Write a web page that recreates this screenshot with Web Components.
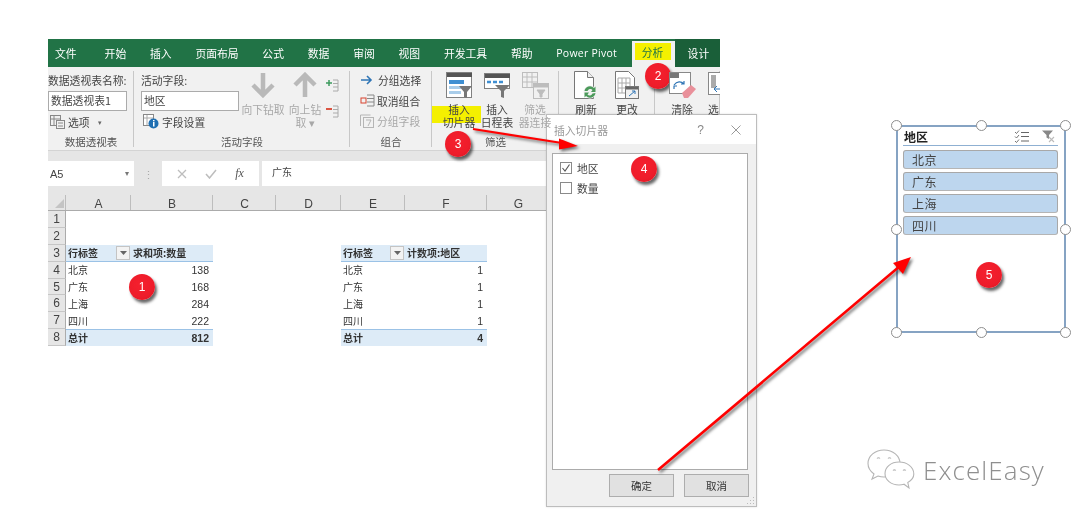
<!DOCTYPE html>
<html lang="zh"><head><meta charset="utf-8"><title>插入切片器</title>
<style>
html,body{margin:0;background:#fff}
body{font-family:"Noto Sans CJK SC","Liberation Sans",sans-serif;color:#444}
svg{display:block}
</style></head><body>
<x-app>
  <x-excel></x-excel>
  <x-dialog></x-dialog>
  <x-slicer></x-slicer>
  <x-logo></x-logo>
  <x-arrows></x-arrows>
  <x-badge style="left:129px;top:274px">1</x-badge>
  <x-badge style="left:645px;top:63px">2</x-badge>
  <x-badge style="left:445px;top:131px">3</x-badge>
  <x-badge style="left:631px;top:156px">4</x-badge>
  <x-badge style="left:976px;top:262px">5</x-badge>
</x-app>
<script>
const FONT='"Noto Sans CJK SC","Liberation Sans",sans-serif';
function def(name,css,html){
  customElements.define(name,class extends HTMLElement{
    constructor(){super();const s=this.attachShadow({mode:'open'});
      s.innerHTML='<style>'+css+'svg{display:block}</style>'+(typeof html==='function'?html(this):html);}
  });
}
def('x-app',':host{display:block;position:relative;width:1080px;height:522px;overflow:hidden;background:#fff;filter:blur(.3px)}','<slot></slot>');

def('x-badge',`:host{position:absolute;display:flex;width:26px;height:26px;border-radius:50%;align-items:center;justify-content:center;
  background:radial-gradient(circle at 45% 40%,#f5202e 0,#ee1c2a 60%,#d5141f 100%);color:#fff;font:12px "Liberation Sans",sans-serif;
  box-shadow:2px 3px 3px rgba(0,0,0,.6)}`,'<slot></slot>');

def('x-arrows',':host{position:absolute;left:0;top:0;width:1080px;height:522px;display:block;pointer-events:none}',
`<svg width="1080" height="522" style="filter:drop-shadow(2px 2px 1.5px rgba(0,0,0,.55))">
  <g fill="#f00" stroke="#f00">
   <line x1="473" y1="129" x2="562" y2="143" stroke-width="2.2"/>
   <polygon points="578,146 559,138.5 559,149.5" stroke="none"/>
   <line x1="658" y1="470" x2="900" y2="266" stroke-width="2.6"/>
   <polygon points="911,257 893,263 903,274" stroke="none"/>
  </g></svg>`);

/* ribbon group */
def('x-group',`:host{display:flex;flex-direction:column;box-sizing:border-box;position:relative;height:83px;flex:none}
 .c{flex:1;display:flex;min-height:0;position:relative;z-index:1}
 .t{height:16px;line-height:16px;text-align:center;font-size:10.5px;color:#555;flex:none;position:relative;z-index:2}
 :host::after{content:"";position:absolute;right:0;top:4px;bottom:3px;width:1px;background:#c8c8c8}`,
 h=>`<div class="c"><slot></slot></div><div class="t">${h.getAttribute('title')||''}</div>`);

/* big ribbon button */
def('x-big',`:host{display:flex;flex-direction:column;align-items:center;flex:none;position:relative;font-size:10.8px;line-height:13px;text-align:center;color:#444}
 :host([off]){color:#a8a8a8}
 .i{height:36px;display:flex;align-items:center;justify-content:center;flex:none}
 .l{white-space:pre;position:relative}`,
 h=>`<div class="i"><slot name="i"></slot></div><div class="l">${h.getAttribute('label')}</div>`);

const sIcon={
 down:'<svg width="24" height="26" viewBox="0 0 24 26" fill="none" stroke="#b9b9b9" stroke-width="4.5"><path d="M12 1V23M2 13l10 10 10-10"/></svg>',
 up:'<svg width="24" height="26" viewBox="0 0 24 26" fill="none" stroke="#b9b9b9" stroke-width="4.5"><path d="M12 25V3M2 13L12 3l10 10"/></svg>',
 slicer:'<svg width="27" height="27" viewBox="0 0 27 27"><rect x=".5" y=".5" width="25" height="25" fill="#fff" stroke="#808080"/><rect x="1" y="1" width="25" height="4" fill="#555"/><rect x="3" y="8" width="15" height="4" fill="#3f8fd2"/><rect x="3" y="14" width="12" height="3" fill="#a9cdea"/><rect x="3" y="19" width="12" height="3" fill="#a9cdea"/><path d="M13 14h13l-5 6v6l-3-1v-5z" fill="#777"/></svg>',
 time:'<svg width="27" height="27" viewBox="0 0 27 27"><rect x=".5" y="1.5" width="25" height="15" fill="#fff" stroke="#808080"/><rect x="1" y="2" width="25" height="4" fill="#555"/><path d="M3 10h4M9 10h4M15 10h4" stroke="#3f8fd2" stroke-width="2.5"/><path d="M11 13h15l-6 6v7l-3-1v-6z" fill="#777"/></svg>',
 conn:'<svg width="27" height="27" viewBox="0 0 27 27" fill="none" stroke="#bdbdbd"><rect x=".5" y=".5" width="15" height="15"/><path d="M5 1v14M10 1v14M1 5h14M1 10h14"/><rect x="11.5" y="11.5" width="15" height="15" fill="#f1f1f1"/><rect x="12" y="12" width="14" height="3" fill="#bdbdbd"/><path d="M15 18h8l-3 4v3h-2v-3z" fill="#bdbdbd"/></svg>',
 refresh:'<svg width="24" height="29" viewBox="0 0 24 29"><path d="M.5.5h13l6 6v21H.5z" fill="#fff" stroke="#777"/><path d="M13.5.5v6h6" fill="#eee" stroke="#777"/><circle cx="16" cy="21" r="6.5" fill="#f1f1f1"/><path d="M10.5 20a5.5 5.5 0 0 1 9.5-3l1.5-1.5V21H17l1.5-2a3 3 0 0 0-5 1zM21.5 22a5.5 5.5 0 0 1-9.5 3l-1.5 1.5V21.5H15L13.5 23.5a3 3 0 0 0 5-1z" fill="#4c9a5b"/></svg>',
 change:'<svg width="24" height="29" viewBox="0 0 24 29"><path d="M.5.5h13l6 6v21H.5z" fill="#fff" stroke="#777"/><path d="M3 7h12v15H3zM3 12h12M3 17h12M7 7v15M11 7v15" stroke="#aaa" fill="none"/><rect x="10.5" y="15.5" width="13" height="12" fill="#f1f1f1" stroke="#777"/><rect x="11" y="16" width="12" height="2.5" fill="#666"/><path d="M14 25l6-5M20 23v-3h-3" stroke="#2f75b5" fill="none"/></svg>',
 clear:'<svg width="27" height="27" viewBox="0 0 27 27"><rect x=".5" y=".5" width="21" height="21" fill="#fff" stroke="#888"/><rect x="1" y="1" width="9" height="5" fill="#777"/><path d="M5 13c3-4 7-4 10-1M15 9v3h-3M5 17v-3h3" fill="none" stroke="#2f75b5" stroke-width="1.2"/><path d="M13 21l9-8 5 4-8 9h-4z" fill="#e9909a"/></svg>',
 sel:'<svg width="27" height="27" viewBox="0 0 27 27"><rect x=".5" y=".5" width="24" height="22" fill="#fff" stroke="#888"/><rect x="3" y="3" width="5" height="13" fill="#aaa"/><path d="M6 17h7M6 17l3-3M6 17l3 3" stroke="#2f75b5" fill="none"/></svg>'
};

def('x-excel',`:host{position:absolute;left:48px;top:39px;width:672px;display:flex;flex-direction:column;overflow:hidden;font-family:${FONT};color:#444}
 .tabs{display:flex;height:28px;background:#217346;color:#fff;font-size:10.8px;align-items:stretch;padding-left:7px;position:relative;flex:none}
 .tabs span{display:flex;align-items:center;margin-right:23.8px;white-space:nowrap}
 .tabs span.pp{font-family:"Open Sans",sans-serif;font-size:10.5px;letter-spacing:.25px;margin-right:14.6px}
 .tabs span.act{background:#f1f1f1;color:#217346;margin:2px 0 0 0;width:43px;position:relative;box-sizing:border-box}
 .tabs span.act i{position:absolute;left:3px;top:2px;width:36px;height:17px;padding-top:2px;box-sizing:border-box;background:#f4f000;font-style:normal;text-align:center;line-height:15px}
 .tabs span.dk{flex:1;margin:0;background:#1a5f39;display:flex;align-items:center;padding-left:13px}
 .ribbon{display:flex;height:83px;background:#f1f1f1;border-bottom:1px solid #d4d4d4;font-size:10.8px;flex:none}
 .col{display:flex;flex-direction:column;padding-top:3px}
 .lb{height:21px;line-height:21px;white-space:nowrap}
 .inp{box-sizing:border-box;height:20px;border:1px solid #ababab;background:#fff;line-height:17px;padding-left:2px;font-size:10.8px;white-space:nowrap}
 .row{display:flex;align-items:center;gap:3px;height:21px;white-space:nowrap;color:#444}
 .row.off{color:#a8a8a8}
 .grp3{padding-top:3px}
 .grp3 .row{height:20.5px}
 .fb{height:35px;background:#e6e6e6;display:flex;align-items:flex-end;font-size:10px;flex:none;position:relative}
 .box{background:#fff;height:25px;box-sizing:border-box;display:flex;align-items:center}
 .y{position:absolute;left:0;top:39px;width:49px;height:17px;background:#f4f000}
 x-sheet{display:block}`,
`<div class="tabs">
  <span style="margin-right:28px">文件</span><span>开始</span><span>插入</span><span>页面布局</span><span>公式</span><span>数据</span><span>审阅</span><span>视图</span><span>开发工具</span><span>帮助</span><span class="pp">Power Pivot</span>
  <span class="act"><i>分析</i></span><span class="dk">设计</span>
 </div>
 <div class="ribbon">
  <x-group title="数据透视表" style="width:86px">
    <div class="col">
      <div class="lb">数据透视表名称:</div>
      <div class="inp" style="width:79px">数据透视表1</div>
      <div class="row" style="padding-left:2px">
        <svg width="15" height="14" viewBox="0 0 15 14" fill="none" stroke="#888"><rect x=".5" y=".5" width="10" height="10"/><path d="M4 1v9M1 4h9"/><rect x="6.5" y="5.5" width="8" height="8" fill="#f1f1f1"/><path d="M8 8h5M8 11h5"/></svg>
        <span>选项</span><span style="margin-left:5px;font-size:7px;color:#666">▾</span></div>
    </div>
  </x-group>
  <x-group title="活动字段" style="width:216px">
    <div class="col" style="margin-left:7px;width:98px">
      <div class="lb">活动字段:</div>
      <div class="inp">地区</div>
      <div class="row" style="padding-left:2px">
        <svg width="16" height="15" viewBox="0 0 16 15"><rect x=".5" y=".5" width="10" height="11" fill="#fff" stroke="#888"/><path d="M1 4h9M4 1v10" stroke="#aaa"/><circle cx="10.5" cy="9.5" r="5" fill="#1f6fb2"/><rect x="10" y="8" width="1.5" height="4.5" fill="#fff"/><rect x="10" y="6" width="1.5" height="1.3" fill="#fff"/></svg>
        <span>字段设置</span></div>
    </div>
    <x-big off label="向下钻取" style="width:44px;margin-left:2px"><span slot="i">${sIcon.down}</span></x-big>
    <x-big off label="向上钻
取 ▾" style="width:34px;margin-left:3px"><span slot="i">${sIcon.up}</span></x-big>
    <div class="col" style="margin-left:3px;padding-top:12px;gap:13px">
      <svg width="14" height="13" viewBox="0 0 14 13"><path d="M1 4h6M4 1v6" stroke="#3d9a5d" stroke-width="1.5"/><path d="M8 1h5v11H8M8 4.5h5M8 8h5" stroke="#aaa" fill="none"/></svg>
      <svg width="14" height="13" viewBox="0 0 14 13"><path d="M1 4h6" stroke="#d8432f" stroke-width="1.8"/><path d="M8 1h5v11H8M8 4.5h5M8 8h5" stroke="#aaa" fill="none"/></svg>
    </div>
  </x-group>
  <x-group title="组合" style="width:82px">
    <div class="col grp3" style="margin-left:11px">
      <div class="row" style="gap:5px"><svg width="12" height="10" viewBox="0 0 12 10" fill="none" stroke="#2f75b5" stroke-width="1.6"><path d="M0 5h10M6 1l4 4-4 4"/></svg>分组选择</div>
      <div class="row" style="gap:2px;margin-left:-1px"><svg width="15" height="13" viewBox="0 0 15 13" fill="none"><rect x="1" y="4" width="5" height="5" stroke="#d8432f"/><path d="M7 1h7v11H7M7 4.5h7M7 8h7" stroke="#888"/></svg>取消组合</div>
      <div class="row off" style="gap:2px;margin-left:-1px"><svg width="15" height="14" viewBox="0 0 15 14" fill="none" stroke="#b5b5b5"><path d="M.5 12V1h10"/><rect x="3.5" y="3.5" width="10" height="10"/><path d="M6 6h5l-3 6"/></svg>分组字段</div>
    </div>
  </x-group>
  <x-group title="筛选" style="width:127px">
    <div class="y"></div>
    <x-big label="插入
切片器" style="width:38px;margin-left:8px"><span slot="i">${sIcon.slicer}</span></x-big>
    <x-big label="插入
日程表" style="width:38px"><span slot="i">${sIcon.time}</span></x-big>
    <x-big off label="筛选
器连接" style="width:38px"><span slot="i">${sIcon.conn}</span></x-big>
  </x-group>
  <x-group title="" style="width:96px">
    <x-big label="刷新" style="width:38px;margin-left:8px"><span slot="i">${sIcon.refresh}</span></x-big>
    <x-big label="更改" style="width:38px;margin-left:3px"><span slot="i">${sIcon.change}</span></x-big>
  </x-group>
  <x-group title="" style="width:65px">
    <x-big label="清除" style="width:38px;margin-left:8px"><span slot="i">${sIcon.clear}</span></x-big>
    <x-big label="选" style="width:11px;margin-left:7px;align-items:flex-start"><span slot="i">${sIcon.sel}</span></x-big>
  </x-group>
 </div>
 <div class="fb">
   <div class="box" style="width:86px;justify-content:space-between;padding:0 5px 0 2px;font:11px 'Liberation Sans',sans-serif"><span>A5</span><span style="font-size:8px;color:#777">▾</span></div>
   <div style="width:28px;height:25px;display:flex;align-items:center;justify-content:center;color:#aaa;font-size:11px">⋮</div>
   <div class="box" style="width:97px;justify-content:space-around;padding:0 6px">
     <svg width="10" height="10" viewBox="0 0 10 10" stroke="#bdbdbd" stroke-width="1.3"><path d="M1 1l8 8M9 1l-8 8"/></svg>
     <svg width="12" height="10" viewBox="0 0 12 10" stroke="#bdbdbd" stroke-width="1.5" fill="none"><path d="M1 5l3.5 4L11 1"/></svg>
     <span style="font:italic 12px 'Liberation Serif',serif;color:#555">fx</span>
   </div>
   <div class="box" style="margin-left:3px;flex:1;padding:0 0 4px 10px">广东</div>
 </div>
 <x-sheet></x-sheet>`);

/* pivot sheet */
(function(){
 const cols=['A','B','C','D','E','F','G'];
 const data={3:{A:['行标签','h f'],B:['求和项:数量','h'],E:['行标签','h f'],F:['计数项:地区','h']},
  4:{A:['北京'],B:['138','n'],E:['北京'],F:['1','n']},
  5:{A:['广东'],B:['168','n'],E:['广东'],F:['1','n']},
  6:{A:['上海'],B:['284','n'],E:['上海'],F:['1','n']},
  7:{A:['四川'],B:['222','n'],E:['四川'],F:['1','n']},
  8:{A:['总计','t'],B:['812','t n'],E:['总计','t'],F:['4','t n']}};
 let html='<div class="g"><div class="ch corner"><svg width="9" height="9"><path d="M9 0V9H0z" fill="#c4c4c4"/></svg></div>';
 cols.forEach(c=>html+=`<div class="ch">${c}</div>`);
 for(let r=1;r<=8;r++){
  html+=`<div class="rh">${r}</div>`;
  cols.forEach(c=>{
    const d=(data[r]||{})[c];
    if(d){
      html+=`<div class="c ${d[1]||''}"><span>${d[0]}</span>${(d[1]||'').includes('f')?'<b class="fb"><svg width="7" height="4"><path d="M0 0h7L3.5 4z" fill="#666"/></svg></b>':''}</div>`;
    } else html+='<div class="c"></div>';
  });
 }
 html+='</div>';
 def('x-sheet',`:host{display:block;background:#fff;font-family:${FONT}}
 .g{display:grid;grid-template-columns:18px 65px 82px 63px 65px 64px 82px 63px;grid-template-rows:25px repeat(8,16.875px);width:498px;overflow:hidden}
 .ch{background:#e6e6e6;border-bottom:1px solid #ababab;box-sizing:border-box;text-align:center;font:12px/36px "Liberation Sans",sans-serif;color:#444;position:relative;overflow:hidden}
 .ch::after{content:"";position:absolute;right:0;top:9px;bottom:0;width:1px;background:#bdbdbd}
 .corner svg{position:absolute;right:2px;bottom:2px}
 .rh{background:#e6e6e6;border-right:1px solid #ababab;border-bottom:1px solid #c6c6c6;box-sizing:border-box;text-align:center;font:12px/16px "Liberation Sans",sans-serif;color:#444}
 .c{box-sizing:border-box;font-size:10px;line-height:16px;padding:0 2px;color:#333;white-space:nowrap;position:relative;display:flex;align-items:center;min-height:0}
 .c span{display:block}
 .n{justify-content:flex-end;font:10.5px "Liberation Sans",sans-serif;padding-right:4px}
 .h{background:#ddebf7;font-weight:700;border-bottom:1px solid #9bc2e6}
 .t{background:#ddebf7;font-weight:700;border-top:1px solid #9bc2e6}
 .t.n{font-weight:700}
 .fb{position:absolute;right:1px;top:1px;width:14px;height:14px;box-sizing:border-box;background:#f3f3f3;border:1px solid #c4c4c4;display:flex;align-items:center;justify-content:center}`,html);
})();

/* dialog */
def('x-dialog',`:host{position:absolute;left:546px;top:114px;width:211px;height:393px;box-sizing:border-box;border:1px solid #bdbdbd;background:#f0f0f0;display:flex;flex-direction:column;font-family:${FONT};box-shadow:0 0 2px rgba(0,0,0,.12)}
 .tb{height:29px;background:#fff;display:flex;align-items:center;padding:0 15px 0 7px;color:#999;font-size:10.8px;flex:none}
 .tb span{flex:1}
 .tb .q{flex:none;font:12px "Liberation Sans",sans-serif;margin-right:27px;color:#888}
 .list{margin:9px 8px 0 5px;flex:1;border:1px solid #ababab;background:#fff;padding:7px 7px;display:flex;flex-direction:column;gap:6px}
 .it{display:flex;align-items:center;gap:5px;font-size:10.8px;color:#444;height:14px}
 .cb{width:10px;height:10px;border:1px solid #8a8a8a;background:#fff;flex:none}
 .ft{display:flex;justify-content:flex-end;gap:10px;padding:4px 7px 9px 0;flex:none}
 .btn{width:65px;height:23px;box-sizing:border-box;background:#e1e1e1;border:1px solid #adadad;font-size:10.5px;display:flex;align-items:center;justify-content:center;color:#333}
 .grip{position:absolute;right:1px;bottom:1px}`,
`<div class="tb"><span>插入切片器</span><span class="q">?</span><svg width="10" height="10" viewBox="0 0 10 10" stroke="#999"><path d="M.5.5l9 9M9.5.5l-9 9"/></svg></div>
 <div class="list">
  <div class="it"><div class="cb"><svg width="10" height="10" viewBox="0 0 10 10" fill="none" stroke="#555" stroke-width="1.1"><path d="M1.5 5l2.5 3L8.5 1.5"/></svg></div>地区</div>
  <div class="it"><div class="cb"></div>数量</div>
 </div>
 <div class="ft"><div class="btn">确定</div><div class="btn">取消</div></div>
 <svg class="grip" width="8" height="8" fill="#bbb"><rect x="6" y="0" width="1" height="1"/><rect x="3" y="3" width="1" height="1"/><rect x="6" y="3" width="1" height="1"/><rect x="0" y="6" width="1" height="1"/><rect x="3" y="6" width="1" height="1"/><rect x="6" y="6" width="1" height="1"/></svg>`);

/* slicer */
def('x-handle',`:host{position:absolute;width:11px;height:11px;border-radius:50%;background:#fff;border:1.5px solid #8e8e8e;box-sizing:border-box}`,'');
def('x-slicer',`:host{position:absolute;left:896px;top:125px;width:170px;height:208px;box-sizing:border-box;border:2px solid #86a3c3;background:#fff;font-family:${FONT};display:flex;flex-direction:column;padding:0 6px 0 5px}
 .h{display:flex;align-items:center;height:18px;border-bottom:1px solid #8fb0d2;margin-bottom:4px;font-size:12px;font-weight:700;color:#222;flex:none}
 .h span{flex:1;padding-left:1px}
 .its{display:flex;flex-direction:column;gap:3px}
 .i{height:19px;background:#bdd6ee;border:1px solid #a8a8a8;border-bottom-color:#b5b5b5;border-radius:3px;box-sizing:border-box;padding-left:8px;font-size:12px;line-height:17px;color:#444;letter-spacing:.4px}`,
`<div class="h"><span>地区</span>
  <svg width="15" height="13" viewBox="0 0 15 13" fill="none" stroke="#666" style="margin-right:13px"><path d="M1 2l1.5 1.5L5 .5M1 6.5l1.5 1.5L5 5M1 11l1.5 1.5L5 9.5" stroke-width=".9"/><path d="M7 2.5h8M7 6.5h8M7 11h8"/></svg>
  <svg width="14" height="13" viewBox="0 0 14 13" style="margin-right:2px"><path d="M0 .5h11L7 5v4L4.5 7.5V5z" fill="#888"/><path d="M7 7l5 5M12 7l-5 5" stroke="#bbb" stroke-width="1.1"/></svg></div>
 <div class="its"><div class="i">北京</div><div class="i">广东</div><div class="i">上海</div><div class="i">四川</div></div>
 <x-handle style="left:-7px;top:-7px"></x-handle><x-handle style="left:78px;top:-7px"></x-handle><x-handle style="right:-7px;top:-7px"></x-handle>
 <x-handle style="left:-7px;top:97px"></x-handle><x-handle style="right:-7px;top:97px"></x-handle>
 <x-handle style="left:-7px;bottom:-7px"></x-handle><x-handle style="left:78px;bottom:-7px"></x-handle><x-handle style="right:-7px;bottom:-7px"></x-handle>`);

/* logo */
def('x-logo',`:host{position:absolute;left:866px;top:449px;display:flex;align-items:center;gap:6px;color:#8f8f8f}
 span{font:300 26px "Open Sans",sans-serif;letter-spacing:1.1px;line-height:40px}`,
`<svg width="51" height="42" viewBox="0 0 51 42" fill="#fff" stroke="#b5b5b5" stroke-width="1.1">
   <path d="M18 1C9 1 2 7 2 14.5c0 4.5 2.5 8 6 10.5L6 30l6-3c2 .7 4 1 6 1 9 0 16-6 16-13.5S27 1 18 1z"/>
   <path d="M33 13c-8 0-14 5-14 11.5S25 36 33 36c1.8 0 3.5-.3 5-.8l5 3.8-1.2-5.5c3.6-2 6-5 6-8.5C47.8 18 41 13 33 13z"/>
   <path d="M11 9.5a2 2 0 0 1 3 0M22 9.5a2 2 0 0 1 3 0M27 21.5a1.8 1.8 0 0 1 2.8 0M37 21.5a1.8 1.8 0 0 1 2.8 0" fill="none"/>
 </svg><span>ExcelEasy</span>`);
</script>
</body></html>
